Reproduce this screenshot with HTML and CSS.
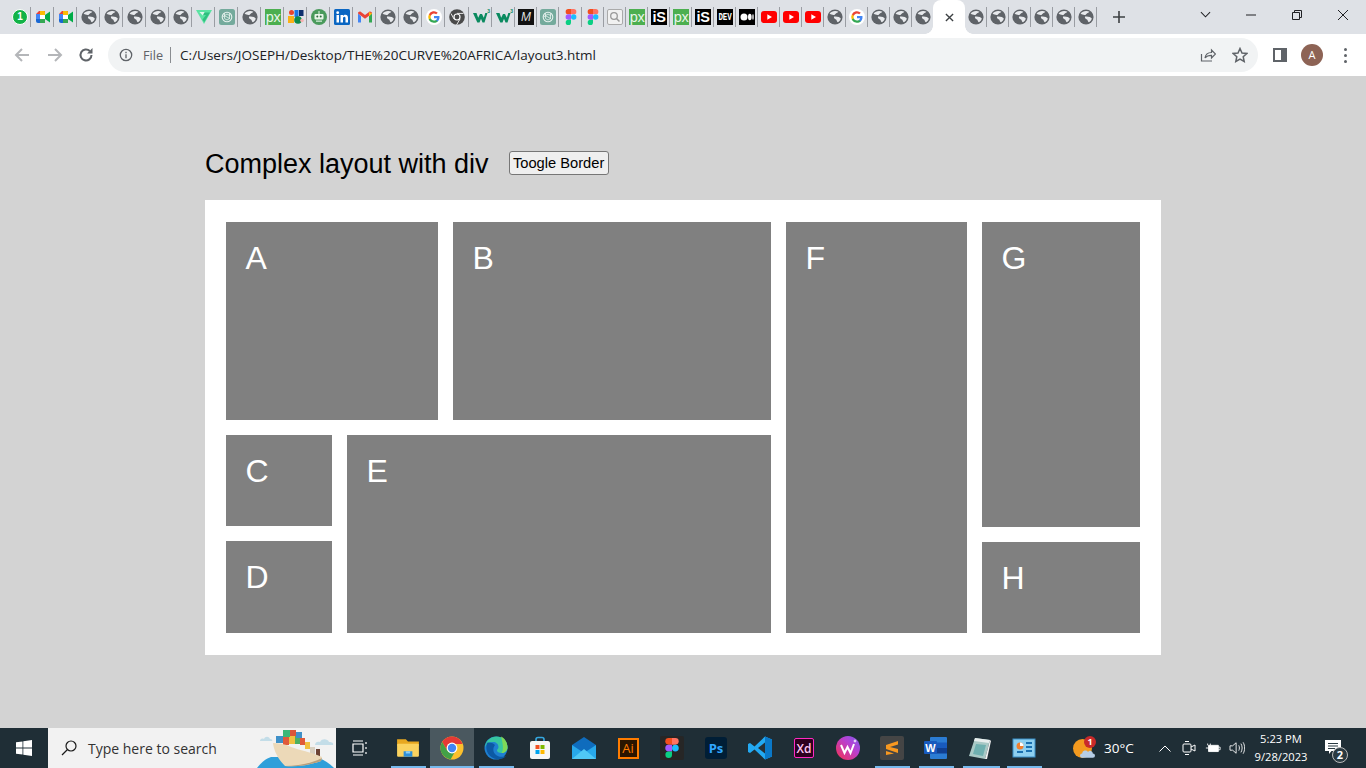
FILE: index.html
```html
<!DOCTYPE html>
<html lang="en">
<head>
<meta charset="utf-8">
<title>Complex layout with div</title>
<link rel="stylesheet" href="styles.css">
</head>
<body>
<svg class="sprite" aria-hidden="true">
  <symbol id="globe" viewBox="0 0 16 16"><circle cx="8" cy="8" r="7.6" fill="#5f6368"/><path d="M2.600 4.400C4 2.700 6 1.800 8.400 1.900c1.100 0 2.100.3 3 .8-.6 1-1.700 1.200-2.500 1.700-.9.500-.7 1.300-1.700 1.500-1 .2-1.800-.1-2.700-.4C4 5.300 3.300 4.900 2.600 4.400zM7 7.600c1.500-.4 3.200-.2 4.800.5.900.4 1.600.9 2 1.500-.4 1.600-1.400 2.900-2.800 3.700-.8-.2-1.200-1-1.300-1.800-.2-.9-1-1-1.700-1.500-.7-.5-1.300-1.400-1-2.400z" fill="#e8eaed"/></symbol>
  <symbol id="meet" viewBox="0 0 16 16"><path d="M1 5l3-3h6v4H5v4H1z" fill="#ea4335"/><path d="M1 5h4v5H1z" fill="#4285f4"/><path d="M1 10h4v4H3a2 2 0 0 1-2-2z" fill="#1967d2"/><path d="M5 10h5v4H5z" fill="#34a853"/><path d="M5 2h4a1 1 0 0 1 1 1v3H5z" fill="#fbbc04"/><path d="M5 6h5v4H5z" fill="#fff"/><path d="M10 6v4l5 3.500V2.500z" fill="#00ac47"/><path d="M10 10h0v3a1 1 0 0 1-1 1H5v-4z" fill="#34a853"/></symbol>
  <symbol id="vue" viewBox="0 0 16 16"><path d="M0 1h16L8 15z" fill="#5be3a3"/><path d="M5 3.500h9L8.200 13.300 6.500 10.500l3.500-4.500H6.500z" fill="#2fbf7f"/><path d="M3.400 3h3.200l2 0-1.800 3.500z" fill="#dff8ec"/></symbol>
  <symbol id="gpt" viewBox="0 0 16 16"><rect width="16" height="16" rx="2.500" fill="#74aa9c"/><circle cx="8" cy="8" r="4.800" fill="none" stroke="#e6f1ee" stroke-width="1.100"/><path d="M5.500 4v5.500L8 11l3-1.700M10.500 4.200v5.300L8 8 5 6.500M3.600 8 6 6.300l2-1.300 3 1.800" fill="none" stroke="#e6f1ee" stroke-width=".8"/></symbol>
  <symbol id="mix" viewBox="0 0 16 16"><rect x="0" y="7" width="6" height="7" fill="#fbb116"/><circle cx="3.500" cy="3.500" r="2.500" fill="#e8442f"/><rect x="6.500" y="1" width="4" height="7" fill="#1b74e4"/><rect x="11" y="1" width="4.500" height="6" fill="#0d2f6e"/><circle cx="10" cy="11" r="3.800" fill="#0d8a4a"/><circle cx="14" cy="11.500" r="1.800" fill="#f6b0b0"/></symbol>
  <symbol id="bot" viewBox="0 0 16 16"><circle cx="8" cy="8" r="8" fill="#4a9a5c"/><rect x="3.500" y="5" width="9" height="5.500" rx="1" fill="#e8f5e9"/><circle cx="6.300" cy="7.500" r="1" fill="#2d6a3d"/><circle cx="9.700" cy="7.500" r="1" fill="#2d6a3d"/><rect x="7.500" y="2" width="1" height="3" fill="#e8f5e9"/><rect x="5" y="11.500" width="6" height="1.300" fill="#cfe9d5"/></symbol>
  <symbol id="linkedin" viewBox="0 0 16 16"><rect width="16" height="16" rx="1.500" fill="#0a66c2"/><rect x="2.500" y="6" width="2.500" height="7.500" fill="#fff"/><circle cx="3.700" cy="3.700" r="1.400" fill="#fff"/><path d="M6.500 6H9v1.100C9.500 6.300 10.400 5.800 11.400 5.800c2 0 2.600 1.300 2.600 3.200v4.500h-2.500v-4c0-1-.2-1.700-1.100-1.700S9 8.500 9 9.500v4H6.500z" fill="#fff"/></symbol>
  <symbol id="gmail" viewBox="0 0 16 16"><path d="M1 4.500v9h3V7.300z" fill="#4285f4"/><path d="M12 7.300v6.200h3v-9z" fill="#34a853"/><path d="M1 4.500 8 9.700l7-5.200c0-1.600-1.800-2.400-3-1.500L8 6 4 3C2.800 2.100 1 2.900 1 4.500z" fill="#ea4335"/><path d="M12 3l3 1.500-3 2.800z" fill="#fbbc04"/></symbol>
  <symbol id="google" viewBox="0 0 16 16"><circle cx="8" cy="8" r="8" fill="#fff"/><path d="M13.500 8.200c0-.4 0-.8-.1-1.200H8v2.200h3.100c-.1.700-.6 1.300-1.200 1.700v1.500h1.900c1.100-1 1.700-2.500 1.700-4.200z" fill="#4285f4"/><path d="M8 13.700c1.500 0 2.800-.5 3.800-1.300l-1.900-1.500c-.5.400-1.100.6-1.900.6-1.500 0-2.700-1-3.200-2.300H2.900V11A5.700 5.700 0 0 0 8 13.700z" fill="#34a853"/><path d="M4.800 9.200a3.400 3.400 0 0 1 0-2.400V5.300H2.900a5.700 5.700 0 0 0 0 5.200z" fill="#fbbc05"/><path d="M8 4.500c.8 0 1.600.3 2.200.8l1.600-1.600A5.700 5.700 0 0 0 2.900 5.300L4.800 6.800C5.300 5.500 6.500 4.500 8 4.500z" fill="#ea4335"/></symbol>
  <symbol id="chromedark" viewBox="0 0 16 16"><circle cx="8" cy="8" r="7.800" fill="#4a4a4a"/><circle cx="8" cy="8" r="3.600" fill="#fff"/><circle cx="8" cy="8" r="2.400" fill="#4a4a4a"/><path d="M8 4.400h6.500M5 10l-3-5.500M11 10l-3.500 6" stroke="#e8e8e8" stroke-width="1"/></symbol>
  <symbol id="w3" viewBox="0 0 16 16"><path d="M0 4h3.500l1.700 4.800L7 5h2l1.800 3.800L12.300 4H14.500l-3 9.500H9.500L8 9.700 6.500 13.500H4.300z" fill="#0a8a5f"/></symbol>
  <symbol id="figma" viewBox="0 0 16 16"><path d="M5.300 0H8v5.300H5.300a2.650 2.650 0 0 1 0-5.300z" fill="#f24e1e"/><path d="M8 0h2.700a2.650 2.650 0 0 1 0 5.300H8z" fill="#ff7262"/><path d="M5.300 5.300H8v5.400H5.300a2.700 2.700 0 0 1 0-5.400z" fill="#a259ff"/><circle cx="10.700" cy="8" r="2.700" fill="#1abcfe"/><path d="M5.300 10.700H8v2.600a2.650 2.650 0 1 1-2.700-2.600z" fill="#0acf83"/></symbol>
  <symbol id="search" viewBox="0 0 16 16"><rect x=".5" y=".5" width="15" height="15" rx="1.500" fill="#f1f1f1" stroke="#aaa"/><circle cx="7" cy="7" r="3.300" fill="none" stroke="#999" stroke-width="1.300"/><path d="M9.500 9.500l3 3" stroke="#999" stroke-width="1.500"/></symbol>
  <symbol id="medium" viewBox="0 0 16 16"><rect width="16" height="16" fill="#000"/><circle cx="5" cy="8" r="3.500" fill="#fff"/><ellipse cx="10.800" cy="8" rx="1.800" ry="3.300" fill="#fff"/><ellipse cx="14" cy="8" rx=".7" ry="3" fill="#fff"/></symbol>
  <symbol id="youtube" viewBox="0 0 16 12"><rect width="16" height="12" rx="3" fill="#f00"/><path d="M6.300 3.300v5.400L11 6z" fill="#fff"/></symbol>
</svg>

<header class="tabstrip">
  <div class="tab t23"><div class="ftile ft-wa">1</div></div>
  <div class="tab t23"><svg class="fav"><use href="#meet"/></svg></div>
  <div class="tab t23"><svg class="fav"><use href="#meet"/></svg></div>
  <div class="tab t23"><svg class="fav"><use href="#globe"/></svg></div>
  <div class="tab t23"><svg class="fav"><use href="#globe"/></svg></div>
  <div class="tab t23"><svg class="fav"><use href="#globe"/></svg></div>
  <div class="tab t23"><svg class="fav"><use href="#globe"/></svg></div>
  <div class="tab t23"><svg class="fav"><use href="#globe"/></svg></div>
  <div class="tab t23"><svg class="fav"><use href="#vue"/></svg></div>
  <div class="tab t23"><svg class="fav"><use href="#gpt"/></svg></div>
  <div class="tab t23"><svg class="fav"><use href="#globe"/></svg></div>
  <div class="tab t23"><div class="ftile ft-px">px</div></div>
  <div class="tab t23"><svg class="fav"><use href="#mix"/></svg></div>
  <div class="tab t23"><svg class="fav"><use href="#bot"/></svg></div>
  <div class="tab t23"><svg class="fav"><use href="#linkedin"/></svg></div>
  <div class="tab t23"><svg class="fav"><use href="#gmail"/></svg></div>
  <div class="tab t23"><svg class="fav"><use href="#globe"/></svg></div>
  <div class="tab t23"><svg class="fav"><use href="#globe"/></svg></div>
  <div class="tab t23"><svg class="fav"><use href="#google"/></svg></div>
  <div class="tab t24"><svg class="fav"><use href="#chromedark"/></svg></div>
  <div class="tab t23"><div class="ftile ft-w"><svg class="fav"><use href="#w3"/></svg><span class="w-sup">3</span></div></div>
  <div class="tab t23"><div class="ftile ft-w"><svg class="fav"><use href="#w3"/></svg><span class="w-sup">3</span></div></div>
  <div class="tab"><div class="ftile ft-m">M</div></div>
  <div class="tab"><svg class="fav"><use href="#gpt"/></svg></div>
  <div class="tab t23"><svg class="fav"><use href="#figma"/></svg></div>
  <div class="tab"><svg class="fav"><use href="#figma"/></svg></div>
  <div class="tab"><svg class="fav"><use href="#search"/></svg></div>
  <div class="tab"><div class="ftile ft-px">px</div></div>
  <div class="tab"><div class="ftile ft-is">iS</div></div>
  <div class="tab"><div class="ftile ft-px">px</div></div>
  <div class="tab"><div class="ftile ft-is">iS</div></div>
  <div class="tab"><div class="ftile ft-dev"><span>DEV</span></div></div>
  <div class="tab"><svg class="fav"><use href="#medium"/></svg></div>
  <div class="tab"><svg class="fav yt"><use href="#youtube"/></svg></div>
  <div class="tab"><svg class="fav yt"><use href="#youtube"/></svg></div>
  <div class="tab"><svg class="fav yt"><use href="#youtube"/></svg></div>
  <div class="tab"><svg class="fav"><use href="#globe"/></svg></div>
  <div class="tab"><svg class="fav"><use href="#google"/></svg></div>
  <div class="tab"><svg class="fav"><use href="#globe"/></svg></div>
  <div class="tab"><svg class="fav"><use href="#globe"/></svg></div>
  <div class="tab t21 nodiv"><svg class="fav"><use href="#globe"/></svg></div>
  <div class="tab-active"><svg class="tabclose" viewBox="0 0 10 10"><path d="M1 1l8 8M9 1l-8 8"/></svg></div>
  <div class="tab"><svg class="fav"><use href="#globe"/></svg></div>
  <div class="tab"><svg class="fav"><use href="#globe"/></svg></div>
  <div class="tab"><svg class="fav"><use href="#globe"/></svg></div>
  <div class="tab"><svg class="fav"><use href="#globe"/></svg></div>
  <div class="tab"><svg class="fav"><use href="#globe"/></svg></div>
  <div class="tab"><svg class="fav"><use href="#globe"/></svg></div>
  <svg class="newtab" viewBox="0 0 12 12"><path d="M6 0v12M0 6h12"/></svg>
  <div class="strip-spacer"></div>
  <svg class="tabsearch" viewBox="0 0 12 7"><path d="M1 1l5 5 5-5"/></svg>
  <div class="winbtn"><svg viewBox="0 0 12 12"><path d="M1 6h10"/></svg></div>
  <div class="winbtn"><svg viewBox="0 0 12 12"><path d="M3.500 3V1.500h7v7H8.500M1.500 3.500h7v7h-7z"/></svg></div>
  <div class="winbtn"><svg viewBox="0 0 12 12"><path d="M1 1l10 10M11 1L1 11"/></svg></div>
</header>

<nav class="toolbar">
  <svg class="tool back" viewBox="0 0 16 16"><path d="M15 8H2M8 2L2 8l6 6"/></svg>
  <svg class="tool forward" viewBox="0 0 16 16"><path d="M1 8h13M8 2l6 6-6 6"/></svg>
  <svg class="tool reload" viewBox="0 0 16 16"><path d="M13.500 8a5.500 5.500 0 1 1-1.700-4"/><path class="solid" d="M14.500 1v5.500H9z"/></svg>
  <div class="omnibox">
    <svg class="info" viewBox="0 0 14 14"><circle cx="7" cy="7" r="5.700"/><path d="M7 6.200v4M7 3.700v1.500"/></svg>
    <span class="scheme">File</span>
    <span class="omni-sep"></span>
    <span class="url">C:/Users/JOSEPH/Desktop/THE%20CURVE%20AFRICA/layout3.html</span>
    <span class="omni-spacer"></span>
    <svg class="omni-act" viewBox="0 0 16 16"><path d="M1.500 7v7h10.500M5 11c.5-3.500 3-5.500 6.500-5.500V3l4 4-4 4V8.300C9 8.300 6.500 9 5 11z"/></svg>
    <svg class="omni-act star" viewBox="0 0 16 16"><path d="M8 1.500l2 4.500 4.800.5-3.600 3.200 1 4.800L8 12.100l-4.200 2.400 1-4.800L1.200 6.500 6 6z"/></svg>
  </div>
  <svg class="sidepanel" viewBox="0 0 14 14"><path fill-rule="evenodd" d="M0 0h14v14H0zM2 2v10h6V2z"/></svg>
  <span class="avatar">A</span>
  <span class="menu"><i></i><i></i><i></i></span>
</nav>

<main class="page">
  <div class="heading">
    <h1 class="title">Complex layout with div</h1>
    <button class="toggle" type="button">Toogle Border</button>
  </div>
  <section class="panel">
    <div class="col-left">
      <div class="row-top">
        <div class="box box-a">A</div>
        <div class="box box-b">B</div>
      </div>
      <div class="row-bottom">
        <div class="col-cd">
          <div class="box box-c">C</div>
          <div class="box box-d">D</div>
        </div>
        <div class="box box-e">E</div>
      </div>
    </div>
    <div class="box box-f">F</div>
    <div class="col-gh">
      <div class="box box-g">G</div>
      <div class="box box-h">H</div>
    </div>
  </section>
</main>

<footer class="taskbar">
  <div class="start"><svg viewBox="0 0 16 16"><path d="M0 2.300l6.500-.9v6.200H0zM7.300 1.300L16 0v7.600H7.300zM0 8.400h6.500v6.200L0 13.700zM7.300 8.400H16V16l-8.700-1.200z"/></svg></div>
  <div class="searchbox">
    <svg class="mag" viewBox="0 0 16 16"><circle cx="10" cy="6" r="5"/><path d="M6.500 9.500L1 15"/></svg>
    <span class="searchtext">Type here to search</span>
    <svg class="ship" viewBox="0 0 81 40">
      <path d="M5 13c0-2 2-3 4-2 1-3 5-3 6 0 2 0 3 1 2 2z" fill="#c3dde8"/>
      <path d="M60 17c0-3 3-4 5-3 2-4 8-3 9 0 3 0 5 1 4 3z" fill="#c3dde8"/>
      <path d="M2 40c4-5 8-9 14-11l44 0c8 2 14 6 19 11z" fill="#2f9fda"/>
      <rect x="21" y="8" width="7" height="7" fill="#3f90c8"/><rect x="28" y="9" width="6" height="8" fill="#e05a3a"/><rect x="34" y="8" width="6" height="8" fill="#f0c040"/><rect x="40" y="8" width="5" height="8" fill="#4db060"/><rect x="28" y="2" width="7" height="7" fill="#3cb878"/><rect x="35" y="2" width="6" height="6" fill="#d9553a"/><rect x="41" y="4" width="6" height="6" fill="#3f90c8"/><rect x="45" y="10" width="5" height="7" fill="#e05a3a"/><rect x="50" y="14" width="5" height="7" fill="#f0c040"/><rect x="61" y="21" width="4" height="8" fill="#6d4435"/><rect x="55" y="19" width="5" height="7" fill="#d9d0c0"/>
      <path d="M18 15c6 0 12 1 18 4 8 3 20 5 31 10l-1 4c-11 4-24 6-36 5-6-6-11-14-12-23z" fill="#ecd9b8"/>
      <path d="M30 38c12 0 25-2 37-8l-1 3c-11 4-24 6-36 5z" fill="#b89f7c"/>
    </svg>
  </div>
  <div class="taskview"><svg viewBox="0 0 16 16"><path d="M1 1h10M1 15h10M1 4h10v8H1zM14 2v2M14 7v2M14 12v2"/></svg></div>
  <div class="apps">
    <div class="app running"><svg viewBox="0 0 22 22"><path d="M1 3h8l2 2h10v4H1z" fill="#e8a820"/><rect x="1" y="7" width="20" height="12" rx="1" fill="#fbd35f"/><path d="M7 14h8v5H7z" fill="#2e8fd8"/><rect x="9" y="14" width="4" height="2" fill="#8fd0f5"/></svg></div>
    <div class="app current running"><svg viewBox="0 0 24 24"><circle cx="12" cy="12" r="11.500" fill="#fbc02d"/><path d="M12 .5A11.500 11.500 0 0 0 2.200 6l5 8.500 1-6.500H22.500A11.500 11.500 0 0 0 12 .5z" fill="#e53935"/><path d="M2.200 6A11.500 11.500 0 0 0 10.600 23.400L15 15.500 7.200 14.500z" fill="#43a047"/><circle cx="12" cy="12" r="5.400" fill="#fff"/><circle cx="12" cy="12" r="4.200" fill="#4285f4"/></svg></div>
    <div class="app running"><svg viewBox="0 0 24 24"><circle cx="12" cy="12" r="11.500" fill="#1f7fd0"/><path d="M1 11C2 4 7 .5 12.500.5 19 .5 23.500 5 23.500 11.500c0 3.500-3 5.500-6 5.500-2.500 0-4.500-1-4.500-2.500 0-1.500 1.500-1.500 1.500-3.500 0-3-2.500-5-5.500-5-4 0-6.500 2-8 5z" fill="#37c6a0"/><path d="M17 .5C21 2.500 23.500 6.500 23.500 11.500c0 3.500-3 5.500-6 5.500 2-2 2-8-.5-16.500z" fill="#7fd858"/><path d="M3 7C.5 14 5 23 14 23.300c3 .1 6-1 8-3.300-4 1.500-8 1-10.500-1.500C9 16 8.500 12 11 9 8 6.500 5 6 3 7z" fill="#0c59a4"/></svg></div>
    <div class="app"><svg viewBox="0 0 24 24"><path d="M8 5V3.500A2 2 0 0 1 10 1.500h4a2 2 0 0 1 2 2V5" fill="none" stroke="#35a8e0" stroke-width="1.600"/><rect x="2" y="5" width="20" height="18" rx="2" fill="#f6f6f6"/><rect x="7.500" y="9" width="4" height="4" fill="#f25022"/><rect x="12.500" y="9" width="4" height="4" fill="#7fba00"/><rect x="7.500" y="14" width="4" height="4" fill="#00a4ef"/><rect x="12.500" y="14" width="4" height="4" fill="#ffb900"/></svg></div>
    <div class="app"><svg viewBox="0 0 24 24"><path d="M0 9L12 1l12 8v14H0z" fill="#0f6cbd"/><path d="M0 9l12 8 12-8v14H0z" fill="#28a8ea"/><path d="M0 23L12 13l12 10z" fill="#50c8f5"/></svg></div>
    <div class="app"><div class="tile ai">Ai</div></div>
    <div class="app"><div class="figma-tile"><svg viewBox="0 0 16 16"><use href="#figma"/></svg></div></div>
    <div class="app"><div class="tile ps">Ps</div></div>
    <div class="app"><svg viewBox="0 0 24 24"><path d="M17 .5L24 3.500v17L17 23.500 6.500 13.500 2 17 0 16V8l2-1 4.500 3.500z" fill="#23a9f2"/><path d="M17 6.500L10 12l7 5.500z" fill="#262f36"/><path d="M17 .5L24 3.500v17L17 23.500z" fill="#0a78c8"/></svg></div>
    <div class="app"><div class="tile xd">Xd</div></div>
    <div class="app"><svg viewBox="0 0 24 24"><defs><linearGradient id="wpsg" x1="0" y1="1" x2="1" y2="0"><stop offset="0" stop-color="#f5314f"/><stop offset=".6" stop-color="#b93fd0"/><stop offset="1" stop-color="#7b5cf0"/></linearGradient></defs><circle cx="12" cy="12" r="12" fill="url(#wpsg)"/><path d="M5 9l3.500 8 3-6 3 6 3.500-9" fill="none" stroke="#fff" stroke-width="2"/><path d="M19 3l.6 1.400L21 5l-1.400.6L19 7l-.6-1.400L17 5l1.400-.6z" fill="#fff"/></svg></div>
    <div class="app running"><div class="subl"><svg viewBox="0 0 14 16"><path d="M13 1L1 5v4l12 4v-4L5 7l8-2.500zM1 11l8 2.500L1 15z" fill="#f89820"/></svg></div></div>
    <div class="app running"><svg viewBox="0 0 24 24"><rect x="6" y="1" width="17" height="22" rx="1" fill="#2b7cd3"/><rect x="6" y="6.500" width="17" height="5.500" fill="#185abd"/><rect x="6" y="12" width="17" height="5.500" fill="#103f91"/><rect x="0" y="5" width="13" height="13" rx="1" fill="#185abd"/><text x="6.500" y="15.500" class="wordw" font-size="11" fill="#fff" text-anchor="middle">W</text></svg></div>
    <div class="app running two"><svg viewBox="0 0 24 24"><path d="M7 2l15 2-5 19-16-3z" fill="#a9c9c6"/><path d="M7 2l15 2-1 3L6 5z" fill="#e8eeee"/><path d="M8 8l10 1-3 11-10-2z" fill="#6fb0b0"/><path d="M17 23l5-19 1 1-4 18z" fill="#f2f2f2"/></svg></div>
    <div class="app running"><svg viewBox="0 0 24 24"><rect x="1" y="3" width="22" height="18" fill="#8ed0f0" stroke="#3a8fc8"/><circle cx="8" cy="10" r="3.500" fill="#f08030"/><path d="M8 10V6.500A3.500 3.500 0 0 1 11.500 10z" fill="#fff"/><rect x="14" y="6" width="6" height="2" fill="#1a70b0"/><rect x="14" y="10" width="6" height="2" fill="#1a70b0"/><rect x="14" y="14" width="6" height="2" fill="#1a70b0"/><rect x="5" y="15" width="6" height="2" fill="#1a70b0"/></svg></div>
  </div>
  <div class="tray">
    <div class="weather">
      <span class="sun"></span>
      <svg class="cloud" viewBox="0 0 14 8"><path d="M2 8a2 2 0 0 1 0-4 3 3 0 0 1 5.500-1.500A2.500 2.500 0 0 1 12 4a2 2 0 0 1 0 4z"/></svg>
      <span class="badge">1</span>
    </div>
    <span class="temp">30°C</span>
    <svg class="tri chev" viewBox="0 0 12 7"><path d="M.5 6.500L6 1l5.500 5.500"/></svg>
    <svg class="tri cam" viewBox="0 0 16 16"><rect x="2" y="4" width="8" height="8" rx="1"/><path d="M10 7l4-2v6l-4-2M4 1.500h4M4 14.500h4"/></svg>
    <svg class="tri batt" viewBox="0 0 18 12"><path class="solid" d="M4 3h11v7H4z"/><path d="M1 6h3M3 3v-2M6 3v-2M15 5h2v3h-2"/></svg>
    <svg class="tri vol" viewBox="0 0 18 16"><path d="M1 5.500h3L8 2v12l-4-3.500H1zM11 5c1 1.800 1 4.200 0 6M13.500 3c1.800 3 1.800 7 0 10M16 1.500c2.300 4 2.300 9 0 13"/></svg>
    <div class="clock"><span>5:23 PM</span><span>9/28/2023</span></div>
    <div class="notify">
      <svg viewBox="0 0 16 15"><path d="M0 0h16v11H6.500L4 14v-3H0z" fill="#fff"/><path d="M3 3.500h10M3 6h10M3 8.500h7" stroke="#2a3a42" stroke-width="1"/></svg>
      <span class="notify-count">2</span>
    </div>
  </div>
</footer>
</body>
</html>
```

FILE: styles.css
```css
* { box-sizing: border-box; }
html, body { margin: 0; height: 100%; }
body {
  width: 1366px;
  height: 768px;
  overflow: hidden;
  display: flex;
  flex-direction: column;
  background: #d3d3d3;
  font-family: "Liberation Sans", Arial, sans-serif;
}
.sprite { position: absolute; width: 0; height: 0; }
.wordw { font-family: "Liberation Sans", sans-serif; font-weight: 700; }

/* tab strip */
.tabstrip {
  height: 34px;
  flex: none;
  display: flex;
  align-items: flex-start;
  padding-left: 8px;
  background: #dee1e6;
}
.tab {
  flex: none;
  width: 22px;
  height: 20px;
  margin-top: 7px;
  padding-left: 3px;
  display: flex;
  align-items: center;
  border-right: 1px solid #9a9da3;
}
.t23 { width: 23px; padding-left: 4px; }
.t24 { width: 24px; padding-left: 4px; }
.t21 { width: 21px; }
.nodiv { border-right: 0; }
.fav { width: 16px; height: 16px; flex: none; }
.yt { height: 12px; }
.ftile {
  position: relative;
  flex: none;
  width: 16px;
  height: 16px;
  display: flex;
  align-items: center;
  justify-content: center;
  overflow: hidden;
  line-height: 16px;
}
.ft-wa {
  border-radius: 50%;
  border: 1px solid #fff;
  background: #12b347;
  color: #fff;
  font-size: 10px;
  font-weight: 700;
}
.ft-px { background: #4caf50; color: #e8f5e9; font-size: 14.500px; letter-spacing: -0.5px; }
.ft-is { background: #000; color: #fff; font-size: 14.500px; font-weight: 700; letter-spacing: -0.3px; }
.ft-m { background: #111; color: #ddd; font-size: 12px; font-style: italic; }
.ft-dev { background: #000; color: #fff; font: 700 7.500px/16px "Liberation Mono", monospace; }
.ft-dev span { transform: scaleY(1.500); letter-spacing: -0.2px; }
.ft-w { overflow: visible; }
.w-sup { position: absolute; right: -1px; top: -1px; font-size: 5px; line-height: 6px; font-weight: 700; color: #0a8a5f; }
.tab-active {
  flex: none;
  position: relative;
  width: 32px;
  height: 34px;
  display: flex;
  align-items: center;
  justify-content: center;
  background: #fff;
  border-radius: 8px 8px 0 0;
}
.tab-active::before, .tab-active::after {
  content: "";
  position: absolute;
  bottom: 0;
  width: 8px;
  height: 8px;
}
.tab-active::before { left: -8px; background: radial-gradient(circle at 0 0, transparent 7.500px, #fff 8px); }
.tab-active::after { right: -8px; background: radial-gradient(circle at 100% 0, transparent 7.500px, #fff 8px); }
.tabclose { width: 9px; height: 9px; fill: none; stroke: #3c4043; stroke-width: 1.500; }
.newtab { width: 12px; height: 12px; margin: 11px 0 0 16px; flex: none; fill: none; stroke: #3c4043; stroke-width: 1.600; }
.strip-spacer { flex: 1; }
.tabsearch { width: 11px; height: 7px; margin: 11px 17px 0 0; flex: none; fill: none; stroke: #202124; stroke-width: 1.100; }
.winbtn {
  flex: none;
  width: 46px;
  height: 29px;
  display: flex;
  align-items: center;
  justify-content: center;
}
.winbtn svg { width: 12px; height: 12px; fill: none; stroke: #202124; stroke-width: 1; }

/* toolbar */
.toolbar {
  height: 42px;
  flex: none;
  display: flex;
  align-items: center;
  background: #fff;
  padding-left: 14px;
}
.tool { flex: none; width: 16px; height: 16px; fill: none; stroke-width: 2; }
.back, .forward { stroke: #b4b6b9; }
.forward { margin-left: 17px; }
.reload { margin-left: 15px; stroke: #5f6368; }
.reload .solid { fill: #5f6368; stroke: none; }
.omnibox {
  flex: none;
  width: 1150px;
  height: 34px;
  margin-left: 14px;
  display: flex;
  align-items: center;
  padding: 0 10px 0 11px;
  border-radius: 17px;
  background: #f1f3f4;
}
.info { width: 14px; height: 14px; flex: none; fill: none; stroke: #5f6368; stroke-width: 1.300; }
.scheme { margin-left: 10px; font: 12.700px "Open Sans", sans-serif; color: #5f6368; }
.omni-sep { width: 1px; height: 16px; margin: 0 9px 0 7px; background: #8a8d91; }
.url { font: 13.500px "Open Sans", sans-serif; color: #202124; white-space: nowrap; }
.omni-spacer { flex: 1; }
.omni-act { width: 16px; height: 16px; flex: none; fill: none; stroke: #5f6368; stroke-width: 1.200; margin-right: 16px; }
.star { stroke-width: 1.500; margin-right: 0; }
.sidepanel { width: 14px; height: 14px; flex: none; margin-left: 15px; fill: #5f6368; }
.avatar {
  flex: none;
  width: 22px;
  height: 22px;
  margin-left: 14px;
  border-radius: 50%;
  background: #8d6355;
  color: #fff;
  font: 11px/22px "Open Sans", sans-serif;
  text-align: center;
}
.menu { flex: none; margin-left: 21px; display: flex; flex-direction: column; gap: 3px; }
.menu i { display: block; width: 3px; height: 3px; border-radius: 50%; background: #5f6368; }

/* page */
.page { flex: 1; padding: 64px 0 0 205px; }
.heading { display: flex; align-items: center; height: 46px; margin-bottom: 14px; }
.title { margin: 2px 0 0; font-size: 27px; font-weight: 400; color: #000; line-height: 30px; white-space: nowrap; }
.toggle {
  margin-left: 20px;
  width: 100px;
  height: 24px;
  padding: 0;
  font: 14.700px "Liberation Sans", sans-serif;
  white-space: nowrap;
  color: #000;
  background: #efefef;
  border: 1px solid #767676;
  border-radius: 3px;
}
.panel {
  width: 956px;
  height: 455px;
  display: flex;
  gap: 15px;
  padding: 22px 21px;
  background: #fff;
}
.box {
  padding: 18px 19.500px;
  background: #808080;
  color: #fff;
  font-size: 32px;
  line-height: 37px;
}
.col-left { width: 545px; display: flex; flex-direction: column; gap: 15px; flex: none; }
.row-top { display: flex; gap: 15px; height: 198px; flex: none; }
.row-bottom { display: flex; gap: 15px; height: 198px; flex: none; }
.box-a { width: 212px; }
.box-b { width: 318px; }
.col-cd { width: 106px; display: flex; flex-direction: column; gap: 15px; }
.box-c { height: 91px; }
.box-d { height: 92px; }
.box-e { width: 424px; }
.box-f { width: 181px; flex: none; }
.col-gh { width: 158px; flex: none; display: flex; flex-direction: column; gap: 15px; }
.box-g { height: 305px; }
.box-h { height: 91px; }

/* taskbar */
.taskbar {
  height: 40px;
  flex: none;
  display: flex;
  align-items: stretch;
  background: #1f2e36;
  color: #fff;
}
.start { width: 48px; display: flex; align-items: center; justify-content: center; }
.start svg { width: 16px; height: 16px; fill: #fff; }
.searchbox {
  position: relative;
  width: 288px;
  display: flex;
  align-items: center;
  background: #f2f2f2;
  overflow: hidden;
}
.mag { width: 16px; height: 16px; margin-left: 13px; fill: none; stroke: #1a1a1a; stroke-width: 1.200; flex: none; }
.searchtext { margin-left: 11px; font: 14px "Open Sans", sans-serif; color: #333; white-space: nowrap; }
.ship { position: absolute; right: 0; top: 0; width: 81px; height: 40px; }
.taskview { width: 50px; display: flex; align-items: center; justify-content: center; padding-right: 2px; }
.taskview svg { width: 16px; height: 16px; fill: none; stroke: #fff; stroke-width: 1.200; }
.apps { display: flex; }
.app {
  position: relative;
  width: 44px;
  display: flex;
  align-items: center;
  justify-content: center;
}
.app > svg { width: 24px; height: 24px; }
.app.running::after {
  content: "";
  position: absolute;
  left: 5px;
  right: 4px;
  bottom: 0;
  height: 2px;
  background: #76b9ed;
}
.app.current { background: #4a585f; }
.app.current::after { left: 0; right: 0; }
.app.two::after { right: 2px; }
.tile {
  display: flex;
  align-items: center;
  justify-content: center;
  font-family: "Open Sans", sans-serif;
}
.ai { width: 21px; height: 21px; background: #2b1500; color: #ff7c00; border: 2px solid #ff7c00; font-size: 13px; }
.ps { width: 22px; height: 22px; background: #001e36; color: #31a8ff; border-radius: 3px; font-size: 13px; font-weight: 700; }
.xd { width: 20px; height: 20px; background: #2e001f; color: #ffc8f2; border: 1.500px solid #ff2bc2; border-radius: 2px; font-size: 12px; font-weight: 600; }
.figma-tile { width: 24px; height: 24px; background: #262626; border-radius: 2px; display: flex; align-items: center; justify-content: center; }
.figma-tile svg { width: 20px; height: 20px; }
.subl { width: 24px; height: 24px; background: #454545; border-radius: 2px; display: flex; align-items: center; justify-content: center; }
.subl svg { width: 14px; height: 16px; }
.tray { flex: 1; display: flex; align-items: center; min-width: 0; }
.weather { position: relative; width: 24px; height: 24px; margin-left: 26px; flex: none; }
.sun { position: absolute; left: 1px; top: 3px; width: 19px; height: 19px; border-radius: 50%; background: #f39a1f; }
.cloud { position: absolute; left: 8px; top: 13px; width: 15px; height: 9px; fill: #b6cde6; }
.badge {
  position: absolute;
  left: 12px;
  top: 0;
  width: 12px;
  height: 12px;
  border-radius: 50%;
  background: #c92a2a;
  font: 700 9px/12px "Open Sans", sans-serif;
  text-align: center;
  color: #fff;
}
.temp { margin-left: 8px; font: 13.500px "Open Sans", sans-serif; width: 32px; white-space: nowrap; }
.tri { flex: none; fill: none; stroke: #fff; stroke-width: 1; }
.chev { width: 12px; height: 7px; margin-left: 23px; }
.cam { width: 16px; height: 16px; margin-left: 10px; }
.batt { width: 16px; height: 12px; margin-left: 8px; }
.batt .solid { fill: #fff; }
.vol { width: 16px; height: 14px; margin-left: 8px; }
.clock {
  width: 60px;
  margin-left: 6px;
  display: flex;
  flex-direction: column;
  align-items: center;
  font: 11.200px/18px "Open Sans", sans-serif;
  flex: none;
}
.notify { position: relative; width: 16px; height: 15px; margin: 0 0 2px 14px; flex: none; }
.notify svg { width: 16px; height: 15px; display: block; }
.notify-count {
  position: absolute;
  left: 7px;
  top: 7px;
  width: 16px;
  height: 16px;
  border: 1px solid #bbb;
  border-radius: 50%;
  background: #2a3a42;
  font: 700 11px/14px "Open Sans", sans-serif;
  text-align: center;
}
```
